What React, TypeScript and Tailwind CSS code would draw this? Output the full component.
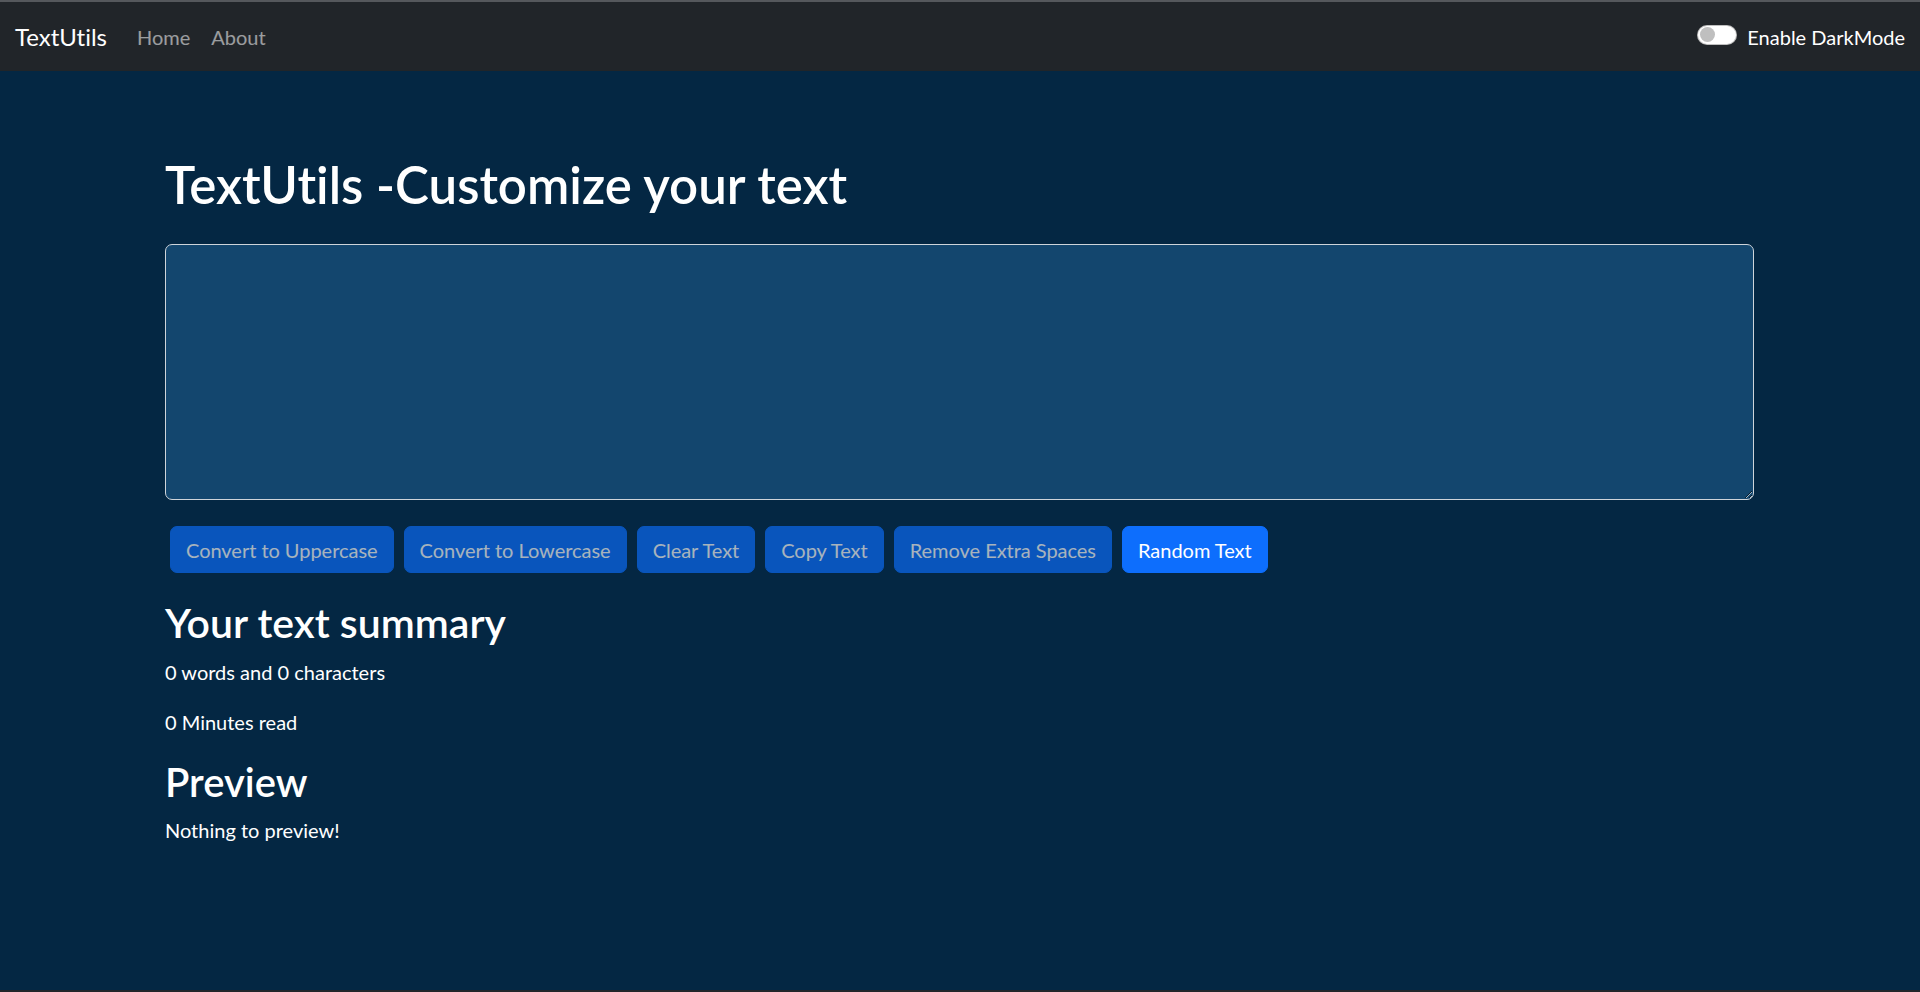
import React from "react";

const buttons = [
  "Convert to Uppercase",
  "Convert to Lowercase",
  "Clear Text",
  "Copy Text",
  "Remove Extra Spaces",
];

export default function App() {
  return (
    <div
      className="h-[992px] flex flex-col bg-[#042743] text-white overflow-hidden [font-variant-ligatures:none]"
      style={{ fontFamily: '"Segoe UI", Lato, "Open Sans", sans-serif' }}
    >
      <div className="h-[2px] bg-[#55585c] shrink-0" />
      <nav className="h-[69px] shrink-0 bg-[#212529] flex items-center pl-[15px] pr-[15px]">
        <a className="text-[24px] leading-[30px] text-white">TextUtils</a>
        <ul className="flex items-center ml-[30px] gap-[21px] text-[20px] leading-[24px]">
          <li className="text-white/55">Home</li>
          <li className="text-white/55">About</li>
        </ul>
        <div className="ml-auto flex items-center">
          <div className="w-[40px] h-[20px] rounded-full bg-white border border-black/25 flex items-center pl-[2px] -mt-[4px]">
            <div className="w-[15px] h-[15px] rounded-full bg-[#bfbfbf]" />
          </div>
          <span className="ml-[10px] text-[20px] leading-[24px] text-white">
            Enable DarkMode
          </span>
        </div>
      </nav>
      <main className="flex-1 pl-[165px] pr-[166px]">
        <h1 className="mt-[83px] mb-[28px] text-[51px] leading-[62px] font-semibold">
          TextUtils -Customize your text
        </h1>
        <textarea
          className="block w-full h-[256px] bg-[#13466e] text-white border border-[#ced4da] rounded-[7px] text-[20px] px-[15px] py-[7px] outline-none"
          defaultValue=""
        />
        <div className="mt-[26px] flex">
          {buttons.map((b) => (
            <button
              key={b}
              disabled
              className="mx-[5px] h-[47px] px-[15px] rounded-[7px] border border-[#0d6efd] bg-[#0d6efd] text-white text-[20px] leading-[30px] tracking-[-0.03px] opacity-65"
            >
              {b}
            </button>
          ))}
          <button className="mx-[5px] h-[47px] px-[15px] rounded-[7px] border border-[#0d6efd] bg-[#0d6efd] text-white text-[20px] leading-[30px] tracking-[-0.03px]">
            Random Text
          </button>
        </div>
        <h2 className="mt-[26px] text-[41px] leading-[48px] font-semibold">Your text summary</h2>
        <p className="mt-[10px] text-[20px] leading-[30px]">0 words and 0 characters</p>
        <p className="mt-[20px] text-[20px] leading-[30px]">0 Minutes read</p>
        <h2 className="mt-[21px] text-[40px] leading-[48px] font-semibold">Preview</h2>
        <p className="mt-[9px] text-[20px] leading-[30px]">Nothing to preview!</p>
      </main>
      <div className="h-[2px] bg-[#22262b] shrink-0" />
    </div>
  );
}
